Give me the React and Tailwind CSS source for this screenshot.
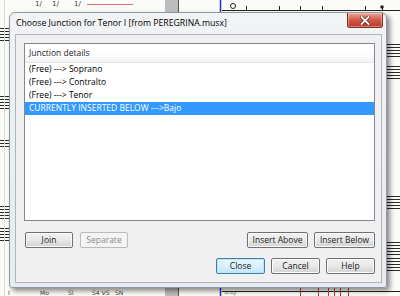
import React from "react";

const font = { fontFamily: '"Open Sans", "Noto Sans", sans-serif' };

const rows = [
  "(Free) ---> Soprano",
  "(Free) ---> Contralto",
  "(Free) ---> Tenor",
];

// the score page behind the dialog
function ScoreBackdrop() {
  const staffLeft = [28, 31, 34, 37, 40, 96, 99, 102, 105, 108, 140, 143, 146, 206, 209, 212, 215, 218, 228, 231, 234, 237, 240];
  const staffRight = [44, 47, 50, 53, 56, 66, 69, 72, 75, 78, 196, 199, 202, 205, 208, 242, 245, 248, 251, 254, 258, 261, 264, 267, 270];
  return (
    <svg className="absolute inset-0" width="400" height="296" viewBox="0 0 400 296">
      <rect width="400" height="296" fill="#fbfbf8" />
      {staffLeft.map((y) => (
        <line key={"l" + y} x1="0" x2="10" y1={y + 0.5} y2={y + 0.5} stroke="#2a2a2a" strokeWidth="1" />
      ))}
      {staffRight.map((y) => (
        <line key={"r" + y} x1="386" x2="400" y1={y + 0.5} y2={y + 0.5} stroke="#2a2a2a" strokeWidth="1" />
      ))}
      <line x1="4.5" x2="4.5" y1="0" y2="296" stroke="#d9d9d9" />
      {/* top strip */}
      {[35, 52, 74].map((x) => (
        <text key={"tt" + x} x={x} y="6" fontSize="7" fill="#333" fontFamily="DejaVu Sans">
          1/
        </text>
      ))}
      <line x1="87" x2="133" y1="4.5" y2="4.5" stroke="#e07070" />
      <rect x="165" y="0" width="13" height="296" fill="#bdbdbd" />
      <line x1="178.5" x2="178.5" y1="0" y2="296" stroke="#555" />
      <line x1="220.5" x2="220.5" y1="0" y2="296" stroke="#3030c0" strokeWidth="1.5" />
      <line x1="222" x2="400" y1="10.5" y2="10.5" stroke="#222" />
      {[246, 279, 300, 322, 365, 382].map((x) => (
        <line key={"t" + x} x1={x + 0.5} x2={x + 0.5} y1="6" y2="10" stroke="#222" />
      ))}
      <circle cx="233" cy="6" r="2.5" fill="none" stroke="#222" />
      <circle cx="382" cy="7" r="1.8" fill="#222" />
      {/* bottom strip */}
      {[
        [8, "I"],
        [40, "Mo"],
        [68, "Sl"],
        [92, "S4 VS"],
        [115, "SN"],
      ].map(([x, t]) => (
        <text key={"bt" + x} x={x} y="295" fontSize="6" fill="#444" fontFamily="DejaVu Sans">
          {t}
        </text>
      ))}
      <line x1="222" x2="400" y1="291.5" y2="291.5" stroke="#222" />
      {[300, 318, 328, 334, 340, 348].map((x) => (
        <line key={"b" + x} x1={x + 0.5} x2={x + 0.5} y1="288" y2="296" stroke="#c04040" />
      ))}
      <text x="224" y="295" fontSize="6" fill="#333" fontFamily="DejaVu Sans">~~/</text>
    </svg>
  );
}

function Button({ children, w = "w-[49px]", disabled, isDefault }) {
  const base = "h-[16px] rounded-[2px] border text-[8.5px] leading-none flex items-center justify-center";
  if (disabled) {
    return (
      <div className={`${base} ${w} border-[#b8bcc0] bg-[#f4f4f4] text-[#8a8a8a]`}>{children}</div>
    );
  }
  if (isDefault) {
    return (
      <div className={`${base} ${w} border-[#3c7fb1] bg-gradient-to-b from-[#eaf6fd] via-[#d9f0fc] to-[#bee6fd] text-[#1a1a1a] shadow-[inset_0_0_0_1px_#bfe4f8]`}>
        {children}
      </div>
    );
  }
  return (
    <div className={`${base} ${w} border-[#707070] bg-gradient-to-b from-[#f2f2f2] via-[#e8e8e8] to-[#d2d2d2] text-[#1a1a1a] shadow-[inset_0_0_0_1px_#fbfbfb]`}>
      {children}
    </div>
  );
}

export default function App() {
  return (
    <div className="relative w-[400px] h-[296px] overflow-hidden" style={font}>
      <ScoreBackdrop />

      <div className="relative pl-[9px] pt-[12px]">
        {/* // Window frame */}
        <div className="w-[378px] h-[276px] rounded-t-[6px] rounded-b-[3px] border border-[#8e98a3] bg-gradient-to-b from-[#f1f3f5] to-[#e7eaee] shadow-[3px_3px_5px_rgba(0,0,0,0.45)] flex flex-col">
          {/* Title bar */}
          <div className="h-[21px] flex items-start justify-between">
            <span className="pl-[6px] pt-[4px] text-[8.7px] leading-[12px] text-black whitespace-nowrap">
              Choose Junction for Tenor I [from PEREGRINA.musx]
            </span>
            <div className="mr-[3px] w-[36px] h-[15px] rounded-b-[3px] border border-t-0 border-[#8b2b20] bg-gradient-to-b from-[#e9a598] via-[#d0584a] to-[#b83a2c] flex items-center justify-center shadow-[inset_0_0_0_1px_rgba(255,255,255,0.35)]">
              <svg width="10" height="9" viewBox="0 0 10 9">
                <path d="M1.5 1 L8.5 8 M8.5 1 L1.5 8" stroke="#5a1a12" strokeWidth="3.2" strokeLinecap="square" />
                <path d="M1.5 1 L8.5 8 M8.5 1 L1.5 8" stroke="#ffffff" strokeWidth="1.8" strokeLinecap="square" />
              </svg>
            </div>
          </div>

          {/* Client area */}
          <div className="ml-[5px] mr-[4px] mb-[4px] flex-1 border border-[#aeb6bf] bg-[#f0f0f0] px-[8px] pt-[8px] flex flex-col">
            {/* Junction list */}
            <div className="w-[351px] h-[178px] border border-[#828790] bg-white">
              <div className="h-[19px] border-b border-[#e5e5e5] bg-gradient-to-b from-white via-white to-[#f1f2f4] flex items-center pl-[4px]">
                <span className="text-[8.5px] leading-none text-[#1e1e1e]">Junction details</span>
              </div>
              {rows.map((r) => (
                <div key={r} className="h-[13px] flex items-center pl-[4px] text-[8.5px] leading-none text-black">
                  {r}
                </div>
              ))}
              <div className="h-[13px] flex items-center pl-[4px] bg-[#3399ff] text-[8.5px] leading-none text-white">
                CURRENTLY INSERTED BELOW ---&gt;Bajo
              </div>
            </div>

            {/* Action buttons */}
            <div className="mt-[11px] flex w-[351px] justify-between">
              <div className="flex gap-[7px] pl-[1px]">
                <Button w="w-[48px]">Join</Button>
                <Button w="w-[48px]" disabled>Separate</Button>
              </div>
              <div className="flex gap-[6px]">
                <Button w="w-[61px]">Insert Above</Button>
                <Button w="w-[61px]">Insert Below</Button>
              </div>
            </div>

            <div className="mt-[10px] flex w-[351px] justify-end gap-[6px]">
              <Button isDefault>Close</Button>
              <Button>Cancel</Button>
              <Button>Help</Button>
            </div>
          </div>
        </div>
      </div>
    </div>
  );
}
